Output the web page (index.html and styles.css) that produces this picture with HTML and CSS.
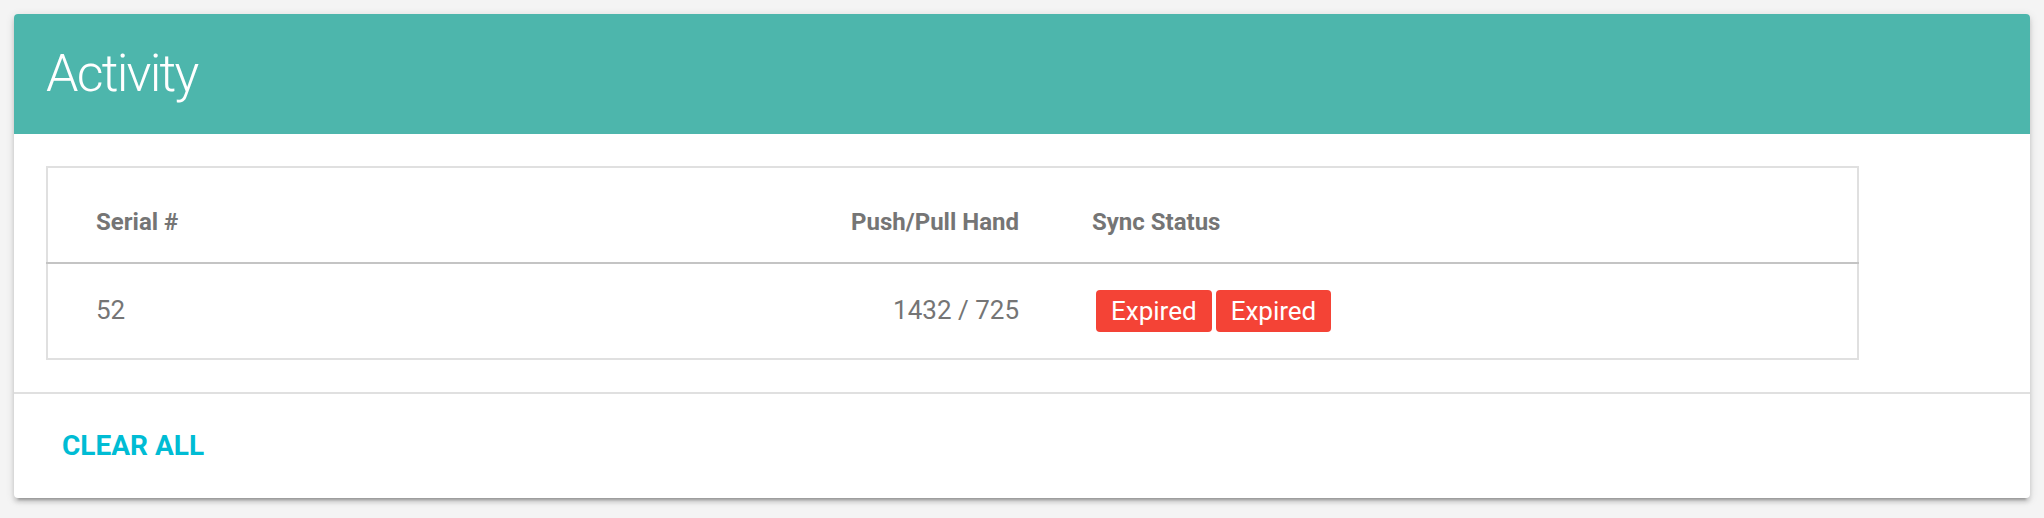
FILE: index.html
```html
<!DOCTYPE html>
<html lang="en">
<head>
<meta charset="utf-8">
<title>Activity</title>
<link rel="stylesheet" href="styles.css">
</head>
<body>
  <div class="card">
    <div class="card-header">
      <h1 class="card-title">Activity</h1>
    </div>
    <div class="card-body">
      <div class="table">
        <div class="row row-head">
          <div class="cell c1">Serial #</div>
          <div class="cell c2">Push/Pull Hand</div>
          <div class="cell c3">Sync Status</div>
        </div>
        <div class="row row-body">
          <div class="cell c1">52</div>
          <div class="cell c2">1432 / 725</div>
          <div class="cell c3">
            <span class="badge">Expired</span>
            <span class="badge">Expired</span>
          </div>
        </div>
      </div>
    </div>
    <div class="card-footer">
      <button class="btn-flat">CLEAR ALL</button>
    </div>
  </div>
</body>
</html>
```
FILE: styles.css
```css
html, body {
  margin: 0;
  padding: 0;
  background: #f4f4f4;
}
body {
  padding: 14px;
  font-family: Roboto, "Liberation Sans", Arial, sans-serif;
  color: #757575;
}
.card {
  width: 2016px;
  background: #ffffff;
  border-radius: 4px;
  box-shadow: 0 4px 4px rgba(0,0,0,0.14), 0 6px 2px -4px rgba(0,0,0,0.2), 0 2px 10px rgba(0,0,0,0.12);
  overflow: hidden;
}
.card-header {
  background: #4db6ac;
  height: 120px;
  display: flex;
  align-items: center;
  padding: 0 32px;
  box-sizing: border-box;
}
.card-title {
  margin: 0;
  font-size: 52px;
  font-weight: 300;
  letter-spacing: -1.8px;
  color: #ffffff;
  line-height: 52px;
}
.card-body {
  padding: 32px;
}
.table {
  width: 1813px;
  box-sizing: border-box;
  border: 2px solid #e0e0e0;
}
.row {
  display: grid;
  grid-template-columns: 700px 306px 1fr;
}
.row-head {
  height: 96px;
  box-sizing: border-box;
  margin: 0 -2px;
  padding: 0 2px;
  border-bottom: 2px solid #c4c4c4;
  align-items: end;
  font-size: 24px;
  font-weight: 700;
  line-height: 24px;
}
.row-head .cell {
  padding-bottom: 28px;
}
.row-body {
  height: 94px;
  align-items: center;
  font-size: 26px;
  line-height: 26px;
}
.c1 {
  padding-left: 48px;
}
.c2 {
  text-align: right;
  padding-right: 35px;
}
.c3 {
  padding-left: 38px;
}
.row-body .c3 {
  display: flex;
  gap: 4px;
  padding-left: 42px;
}
.row-body .c1,
.row-body .c2 {
  padding-bottom: 3px;
}
.badge {
  display: inline-block;
  background: #f44336;
  color: #ffffff;
  height: 42px;
  line-height: 42px;
  padding: 0 15px;
  border-radius: 4px;
  font-size: 26px;
  font-weight: 400;
}
.card-footer {
  border-top: 2px solid #e0e0e0;
  padding: 16px;
}
.btn-flat {
  display: block;
  height: 72px;
  padding: 0 32px;
  border: 0;
  background: transparent;
  font-family: Roboto, "Liberation Sans", Arial, sans-serif;
  font-size: 28px;
  font-weight: 700;
  color: #00bcd4;
  line-height: 72px;
  cursor: pointer;
}
```
